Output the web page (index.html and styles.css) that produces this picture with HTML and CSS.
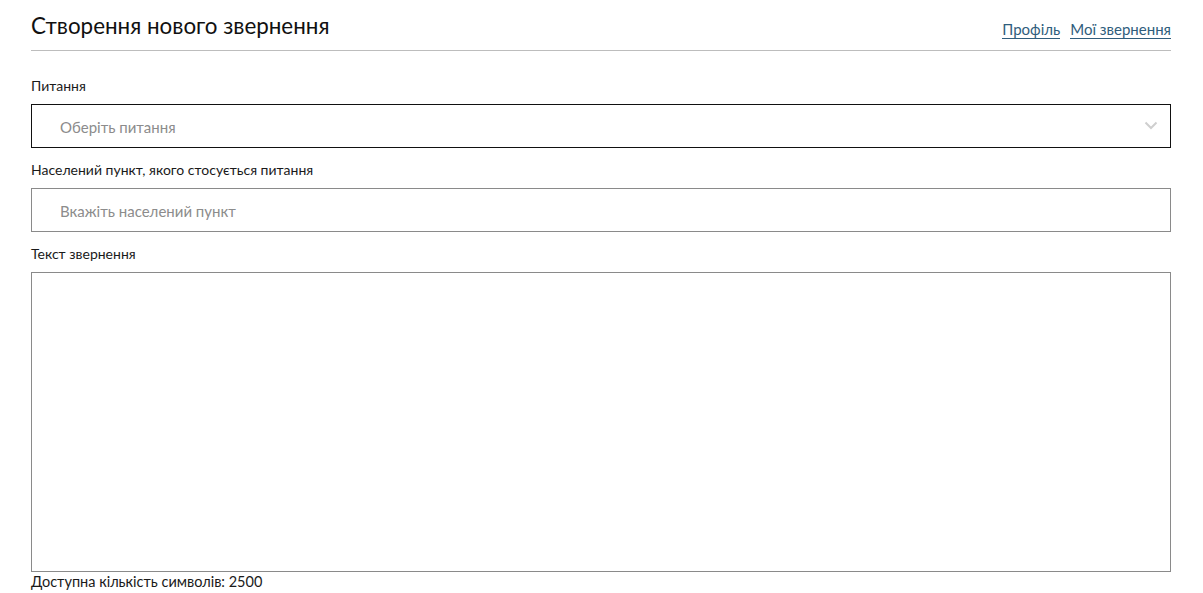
FILE: index.html
```html
<!DOCTYPE html>
<html lang="uk">
<head>
<meta charset="utf-8">
<link rel="stylesheet" href="styles.css">
</head>
<body>
<div class="page">
  <header class="head">
    <h1 class="title">Створення нового звернення</h1>
    <nav class="links">
      <a href="#" class="link">Профіль</a>
      <a href="#" class="link">Мої звернення</a>
    </nav>
  </header>
  <form class="form">
    <div class="field">
      <label class="label">Питання</label>
      <div class="select">
        <span class="placeholder">Оберіть питання</span>
        <svg class="chev" width="14" height="9" viewBox="0 0 14 9"><path d="M1.5 1.5 L7 7 L12.5 1.5" fill="none" stroke="#cfcfcf" stroke-width="2"/></svg>
      </div>
    </div>
    <div class="field">
      <label class="label">Населений пункт, якого стосується питання</label>
      <div class="input"><span class="placeholder">Вкажіть населений пункт</span></div>
    </div>
    <div class="field">
      <label class="label">Текст звернення</label>
      <div class="textarea"></div>
      <div class="counter">Доступна кількість символів: 2500</div>
    </div>
  </form>
</div>
</body>
</html>
```
FILE: styles.css
```css
* { box-sizing: border-box; }
html, body { margin: 0; padding: 0; background: #fff; }
body { font-family: Lato, "Open Sans", sans-serif; color: #1a1a1a; }
.page { width: 1140px; margin: 0 0 0 31px; padding-top: 13px; }
.head { display: flex; justify-content: space-between; align-items: flex-end; border-bottom: 1px solid #bdbdbd; height: 38px; padding-bottom: 10px; }
.title { margin: 0; font-size: 22.4px; font-weight: 400; line-height: 28px; color: #111; }
.links { display: flex; gap: 10px; padding-bottom: 1px; }
.link { color: #2f5d7c; font-size: 15px; line-height: 18px; text-decoration: none; border-bottom: 1px solid #2f5d7c; padding-bottom: 0; }
.form { display: flex; flex-direction: column; padding-top: 26px; }
.field { display: flex; flex-direction: column; }
.label { font-size: 14px; line-height: 18px; margin-bottom: 9px; color: #1a1a1a; }
.select, .input { height: 44px; display: flex; align-items: center; justify-content: space-between; padding: 1px 12px 0 28px; margin-bottom: 13px; }
.select { border: 1px solid #111; }
.input { border: 1px solid #8a8a8a; }
.placeholder { color: #8c8c8c; font-size: 15px; }
.chev { display: block; margin-top: -3px; }
.textarea { height: 300px; border: 1px solid #8a8a8a; }
.counter { font-size: 14.5px; line-height: 20px; margin-top: 0; color: #1a1a1a; }
```
